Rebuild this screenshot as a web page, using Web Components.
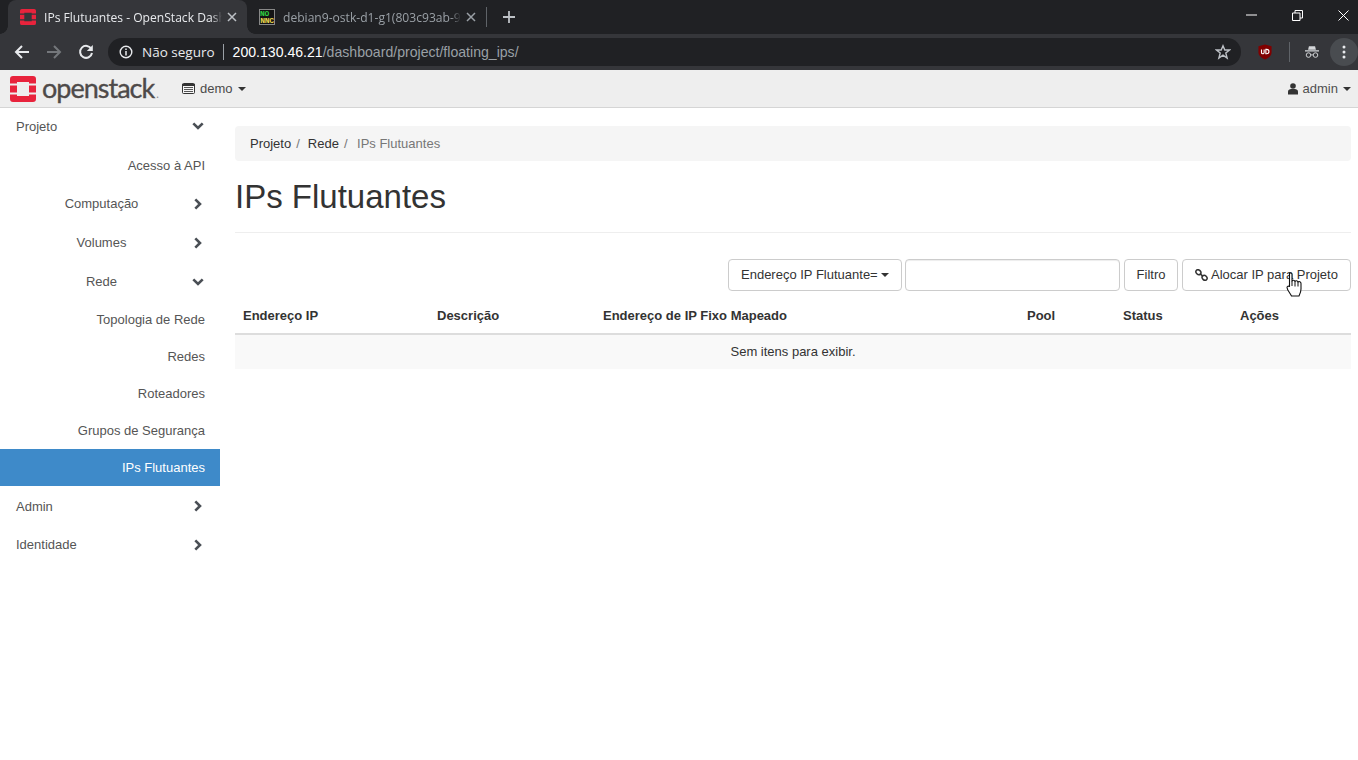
<!DOCTYPE html>
<html lang="pt"><head><meta charset="utf-8"><title>IPs Flutuantes</title>
<style>
html,body{margin:0;padding:0;height:100%;background:#fff;overflow:hidden;font-family:"Liberation Sans",Arial,sans-serif;font-size:13px;color:#333}
body{display:flex;flex-direction:column;width:1358px;height:760px}
</style></head><body>
<chrome-tabs></chrome-tabs>
<chrome-toolbar></chrome-toolbar>
<os-navbar></os-navbar>
<os-main>
  <os-sidebar slot="side">
    <side-item kind="top" arrow="down" h="38">Projeto</side-item>
    <side-item h="39" style="padding-top:1px">Acesso à API</side-item>
    <side-item arrow="right" h="39">Computação</side-item>
    <side-item arrow="right" h="39">Volumes</side-item>
    <side-item arrow="down" h="39">Rede</side-item>
    <side-item h="37">Topologia de Rede</side-item>
    <side-item h="37">Redes</side-item>
    <side-item h="37">Roteadores</side-item>
    <side-item h="37">Grupos de Segurança</side-item>
    <side-item active h="37">IPs Flutuantes</side-item>
    <side-item kind="top" arrow="right" h="40">Admin</side-item>
    <side-item kind="top" arrow="right" h="37">Identidade</side-item>
  </os-sidebar>
  <os-content slot="main">
    <os-breadcrumb></os-breadcrumb>
    <os-title>IPs Flutuantes</os-title>
    <os-filterbar></os-filterbar>
    <os-table></os-table>
  </os-content>
</os-main>
<hand-cursor></hand-cursor>
<script>
function def(name, css, html, init){
  customElements.define(name, class extends HTMLElement{
    connectedCallback(){
      if(this.shadowRoot) return;
      const r=this.attachShadow({mode:"open"});
      r.innerHTML="<style>"+css+"</style>"+(typeof html==="function"?html(this):html);
      if(init) init(this,r);
    }
  });
}
const UI='"Open Sans","Noto Sans",sans-serif';
const LOGO=(s)=>`<svg width="${s}" height="${s}" viewBox="0 0 26 26"><path fill="#e8233c" d="M3 0H23a3 3 0 0 1 3 3V7.500H19V6H7V7.500H0V3a3 3 0 0 1 3-3ZM0 9.500H7V16.500H0ZM19 9.500H26V16.500H19ZM0 18.500H7V20H19V18.500H26V23a3 3 0 0 1-3 3H3a3 3 0 0 1-3-3Z"/></svg>`;
const X='<svg width="10" height="10" viewBox="0 0 10 10"><path d="M1 1L9 9M9 1L1 9" stroke="currentColor" stroke-width="1.500" fill="none"/></svg>';

def("chrome-tabs",`
:host{display:flex;height:34px;background:#202124;flex:none;color:#e8eaed;font:12.100px ${UI};position:relative}
.tab{box-sizing:border-box;display:flex;align-items:center;height:34px;margin-left:8px;width:239px;background:#35363a;border-radius:8px 8px 0 0;padding:0 0 0 12px;position:relative}
.tab:before,.tab:after{content:"";position:absolute;bottom:0;width:8px;height:8px;background:radial-gradient(circle at 0 0,#202124 7.500px,#35363a 8px)}
.tab:before{left:-8px}
.tab:after{right:-8px;transform:scaleX(-1)}
.t{white-space:nowrap;overflow:hidden;width:178px;margin-left:8px;-webkit-mask-image:linear-gradient(90deg,#000 168px,transparent 178px);mask-image:linear-gradient(90deg,#000 168px,transparent 178px)}
.x{display:flex;margin-left:5px;color:#bdc1c6}
.tab2{display:flex;align-items:center;box-sizing:border-box;padding-left:12px;color:#9aa0a6;height:34px}
.tab2 .x{color:#9aa0a6}
.sep{width:1px;height:20px;background:#5f6368;margin-left:10px;align-self:center}
.plus{margin-left:15px;display:flex;align-self:center}
.win{position:absolute;right:0;top:0;display:flex;color:#fff}
.win div{width:46px;height:30px;display:flex;align-items:center;justify-content:center}
.win div:nth-child(2){margin-right:8px}
.win div:nth-child(3){width:30px}
.vnc{width:16px;height:16px;background:#141414;border:1px solid #888;box-sizing:border-box;font:bold 8px/7px "Liberation Mono",monospace;color:#e8d44d;overflow:hidden;flex:none;text-align:center;letter-spacing:-.3px}
.vnc b{color:#2ecc40;display:block;text-align:left}
svg{display:block;flex:none}
`,`<div class="tab">${LOGO(16)}<div class="t">IPs Flutuantes - OpenStack Dashboard</div><div class="x">${X}</div></div>
<div class="tab2"><div class="vnc"><b>NO</b>NNC</div><div class="t">debian9-ostk-d1-g1(803c93ab-9362)</div><div class="x">${X}</div></div>
<div class="sep"></div>
<div class="plus"><svg width="14" height="14" viewBox="0 0 14 14"><path d="M7 1V13M1 7H13" stroke="#bdc1c6" stroke-width="1.800"/></svg></div>
<div class="win">
<div><svg width="11" height="2" viewBox="0 0 11 2"><path d="M0 1H11" stroke="#fff"/></svg></div>
<div><svg width="11" height="11" viewBox="0 0 11 11"><path d="M.5 3H8V10.500H.5ZM3 3V.5H10.500V8H8" stroke="#fff" fill="none"/></svg></div>
<div><svg width="11" height="11" viewBox="0 0 11 11"><path d="M.5 .5L10.500 10.500M10.500 .5L.5 10.500" stroke="#fff" fill="none"/></svg></div>
</div>`);

def("chrome-toolbar",`
:host{display:flex;align-items:center;height:36px;background:#35363a;flex:none;position:relative;color:#e8eaed}
.nav{display:flex;width:32px;justify-content:center;flex:none}
.omni{margin-left:6px;width:1133px;height:28px;border-radius:14px;background:#202124;display:flex;align-items:center;font:14px ${UI};position:relative;box-sizing:border-box;padding-left:11px}
.ns{margin-left:9px;color:#e8eaed;font-size:13.500px;white-space:nowrap}
.bar{width:1px;height:16px;background:#9aa0a6;margin:0 9px 0 8px}
.url{color:#fff;font-family:"Liberation Sans",sans-serif;font-size:14.100px;white-space:nowrap}
.url span{color:#9aa0a6}
.star{position:absolute;right:10px;top:6px}
.ext{display:flex;align-items:center;margin-left:17px}
.d{width:1px;height:20px;background:#5f6368;margin:0 15px 0 17px}
.menu{width:28px;height:28px;border-radius:50%;background:#494c50;display:flex;align-items:center;justify-content:center;margin-left:11px}
svg{display:block;flex:none}
`,`<div class="nav" style="margin-left:6px"><svg width="16" height="16" viewBox="0 0 16 16"><path d="M15 8H2M8 2L2 8L8 14" stroke="#e8eaed" stroke-width="2" fill="none"/></svg></div>
<div class="nav"><svg width="16" height="16" viewBox="0 0 16 16"><path d="M1 8H14M8 2L14 8L8 14" stroke="#74777b" stroke-width="2" fill="none"/></svg></div>
<div class="nav"><svg width="16" height="16" viewBox="0 0 16 16"><path d="M13.400 5A6 6 0 1 0 14 9" stroke="#e8eaed" stroke-width="2" fill="none"/><path d="M14.800 1V7H8.800Z" fill="#e8eaed"/></svg></div>
<div class="omni">
<svg width="14" height="14" viewBox="0 0 14 14"><circle cx="7" cy="7" r="5.800" stroke="#e8eaed" stroke-width="1.400" fill="none"/><path d="M7 6V10.500M7 3.500V5" stroke="#e8eaed" stroke-width="1.500"/></svg>
<span class="ns">Não seguro</span><span class="bar"></span>
<span class="url">200.130.46.21<span>/dashboard/project/floating_ips/</span></span>
<svg class="star" width="16" height="16" viewBox="0 0 16 16"><path d="M8 1.800L9.800 6H14.500L10.800 9L12.100 14L8 11.200L3.900 14L5.200 9L1.500 6H6.200Z" stroke="#bdc1c6" stroke-width="1.400" fill="none"/></svg>
</div>
<div class="ext">
<svg width="14" height="16" viewBox="0 0 16 18"><path d="M8 .5L15.500 2.500V9.500C15.500 13.500 11 16.500 8 17.500C5 16.500 .5 13.500 .5 9.500V2.500Z" fill="#800000"/><path d="M4 6V9.500A1.500 1.500 0 0 0 7 9.500V6M9 6V11H10A2.500 2.500 0 0 0 10 6Z" stroke="#fff" stroke-width="1.300" fill="none"/></svg>
<div class="d"></div>
<svg width="14" height="14" viewBox="0 0 16 14"><path d="M4.500 .5H11.500L12.500 4.500H3.500ZM0 5H16V6.300H0Z" fill="#d4d6d9"/><circle cx="4" cy="10.500" r="2.600" stroke="#d4d6d9" stroke-width="1.100" fill="none"/><circle cx="12" cy="10.500" r="2.600" stroke="#d4d6d9" stroke-width="1.100" fill="none"/><path d="M6.600 10.300H9.400" stroke="#d4d6d9"/></svg>
<div class="menu"><svg width="4" height="14" viewBox="0 0 4 14"><circle cx="2" cy="2" r="1.500" fill="#e8eaed"/><circle cx="2" cy="7" r="1.500" fill="#e8eaed"/><circle cx="2" cy="12" r="1.500" fill="#e8eaed"/></svg></div>
</div>`);

def("os-navbar",`
:host{display:flex;align-items:center;height:38px;box-sizing:border-box;background:#eee;border-bottom:1px solid #d5d5d5;flex:none;font:13px "Liberation Sans",sans-serif;color:#4f4f4f;padding-left:10px}
.mark{margin-left:6px;font:27px/1 Lato,sans-serif;color:#4e4a49;letter-spacing:-1px;white-space:nowrap;position:relative;top:-1px;-webkit-text-stroke:.35px #4e4a49}
.mark i{font-style:normal;color:#8a8a8a;font-size:11px;margin-left:2px;-webkit-text-stroke:0}
.proj{position:absolute;left:182px;display:flex;align-items:center;color:#333}
.proj span{margin-left:5px;color:#4a4a4a}
.caret{width:0;height:0;border:4px solid transparent;border-top-color:#333;border-bottom:0;margin-left:5px}
.user{margin-left:auto;display:flex;align-items:center;padding-right:7px}
.user span{margin-left:5px}
svg{display:block;flex:none}
`,`${LOGO(26)}<div class="mark">openstack<i>.</i></div>
<div class="proj"><svg width="13" height="11" viewBox="0 0 13 11"><rect x=".5" y=".5" width="12" height="10" fill="#f6f6f6" stroke="#333" rx="1"/><path d="M0 1H13V3H0Z" fill="#333"/><path d="M2 4.500H11M2 6.500H11M2 8.500H11" stroke="#555"/></svg><span>demo</span><div class="caret"></div></div>
<div class="user"><svg width="10" height="12" viewBox="0 0 10 12"><circle cx="5" cy="3" r="2.800" fill="#333"/><path d="M0 11.500V8.500C0 6.500 2 6 5 6S10 6.500 10 8.500V11.500Z" fill="#333"/></svg><span>admin</span><div class="caret"></div></div>`);

def("os-main",`
:host{display:flex;flex:1;min-height:0}
::slotted([slot=side]){flex:none}
`,`<slot name="side"></slot><slot name="main"></slot>`);

def("os-sidebar",`:host{display:block;width:220px;margin-top:-1px}`,`<slot></slot>`);

const ARROW={down:'<svg width="12" height="8" viewBox="0 0 12 8"><path d="M1.300 1.300L6 6L10.700 1.300" stroke="#4a4f55" stroke-width="2.600" fill="none"/></svg>',
right:'<svg width="8" height="12" viewBox="0 0 8 12"><path d="M1.300 1.300L6 6L1.300 10.700" stroke="#4a4f55" stroke-width="2.600" fill="none"/></svg>'};
def("side-item",`
:host{display:flex;align-items:center;box-sizing:border-box;padding:0 15px;font-size:13px;color:#555;white-space:nowrap}
:host([active]){background:#3e8ac9;color:#fff}
.txt{margin-left:auto}
.mid{flex:1;text-align:center;margin:0;padding-right:4px}
.left{margin:0 auto 0 1px}
.a{width:12px;margin-right:1px;display:flex;justify-content:center;flex:none}
`,(h)=>{
  const a=h.getAttribute("arrow"),top=h.getAttribute("kind")==="top";
  h.style.height=h.getAttribute("h")+"px";
  const cls=top?"txt left":(a?"txt mid":"txt");
  return `<span class="${cls}"><slot></slot></span>`+(a?`<span class="a">${ARROW[a]}</span>`:"");
});

def("os-content",`:host{display:block;flex:1;min-width:0;padding:18px 7px 0 15px}`,`<slot></slot>`);

def("os-breadcrumb",`
:host{display:flex;align-items:center;height:35px;background:#f5f5f5;border-radius:4px;padding-left:15px;font-size:13px;color:#333}
i{font-style:normal;color:#777;padding:0 5px}
.l{color:#777;margin-left:4.500px}
`,`<span>Projeto</span><i>/</i><span style="margin-left:3px">Rede</span><i>/</i><span class="l">IPs Flutuantes</span>`);

def("os-title",`
:host{display:block;height:72px;box-sizing:border-box;border-bottom:1px solid #eee;font-size:33px;line-height:72px;color:#333}
`,`<slot></slot>`);

def("os-filterbar",`
:host{display:flex;justify-content:flex-end;margin-top:26px;height:33px;font-size:13px}
.b{box-sizing:border-box;height:32px;border:1px solid #ccc;border-radius:4px;background:#fff;color:#333;display:flex;align-items:center;padding:0 12px 1px;white-space:nowrap}
.in{width:215px;margin-left:3px;box-shadow:inset 0 1px 1px rgba(0,0,0,.075);padding:0}
.caret{width:0;height:0;border:4px solid transparent;border-top-color:#333;border-bottom:0;margin-left:3px}
svg{display:block;margin-right:3px;flex:none}
`,`<div class="b" style="width:174px">Endereço IP Flutuante=<div class="caret"></div></div>
<div class="b in"></div>
<div class="b" style="margin-left:4px;width:54px;justify-content:center;padding:0 0 1px">Filtro</div>
<div class="b" style="margin-left:4px;width:169px"><svg width="13" height="12" viewBox="0 0 13 12"><g stroke="#333" stroke-width="1.500" fill="none"><ellipse cx="3.400" cy="3.200" rx="2.700" ry="2.200" transform="rotate(45 3.400 3.200)"/><ellipse cx="9.600" cy="8.800" rx="2.700" ry="2.200" transform="rotate(45 9.600 8.800)"/><path d="M5 4.600L8 7.400"/></g></svg>Alocar IP para Projeto</div>`);

def("os-table",`
:host{display:block;margin-top:5px;font-size:13px;color:#333}
.h{display:grid;grid-template-columns:194px 166px 424px 96px 117px 1fr;height:36px;align-items:center;border-bottom:2px solid #ddd;font-weight:bold}
.h span{padding-left:8px}
.e{height:34px;box-sizing:border-box;padding-bottom:2px;background:#f9f9f9;display:flex;align-items:center;justify-content:center}
`,`<div class="h"><span>Endereço IP</span><span>Descrição</span><span>Endereço de IP Fixo Mapeado</span><span>Pool</span><span>Status</span><span>Ações</span></div><div class="e">Sem itens para exibir.</div>`);

def("hand-cursor",`
:host{position:absolute;left:1286px;top:272px;width:17px;height:26px;display:block}
svg{display:block}
`,`<svg width="17" height="26" viewBox="0 0 17 26"><path d="M3.500 1.500C4.500 .5 6 1 6 2.500V9C6.500 8 8.500 8 9 9.500C9.500 8.500 11.500 8.500 12 10C12.800 9.200 15 9.500 15 11.500V17C15 20 14 22 13 24H5.500C4.500 21.500 1 18 1 15.500C1 14 2.500 13.800 3.500 14.500V2.500Z" fill="#fff" stroke="#111" stroke-width="1.100" stroke-linejoin="round"/><path d="M6 9V14M9 9.500V14.500M12 10V14.500" stroke="#111"/></svg>`);
</script>
</body></html>
